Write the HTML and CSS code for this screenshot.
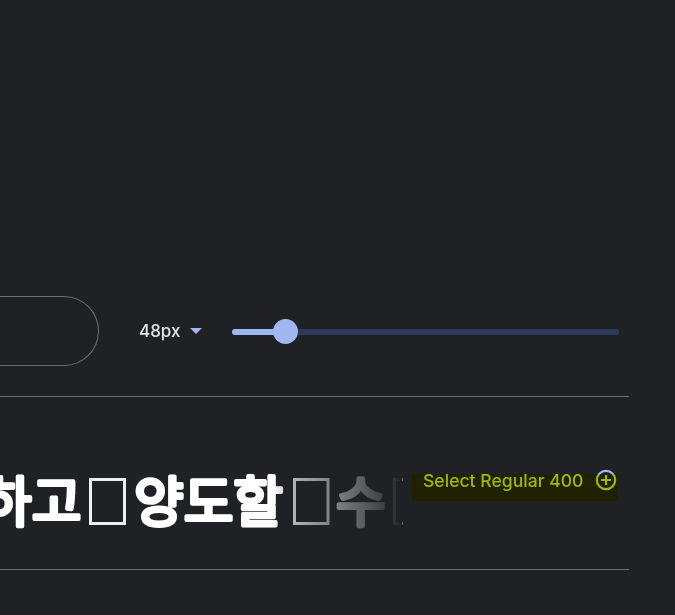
FILE: index.html
```html
<!DOCTYPE html>
<html lang="ko">
<head>
<meta charset="utf-8">
<title>Font style</title>
<link rel="stylesheet" href="styles.css">
</head>
<body>
<main class="page">
  <section class="controls">
    <div class="pill"></div>
    <div class="size-select">
      <span class="size-value">48px</span>
      <span class="caret"></span>
    </div>
    <div class="slider">
      <div class="slider-fill"></div>
      <div class="slider-thumb"></div>
    </div>
  </section>
  <section class="style-row">
    <div class="sample">
      <svg class="sample-svg" width="403" height="172" viewBox="0 0 403 172">
        <text class="glyphs" x="-18" y="125">하고</text>
        <rect class="tofu" x="90.5" y="82.5" width="34" height="44"/>
        <text class="glyphs" x="134" y="125">양도할</text>
        <rect class="tofu" x="294.5" y="82.5" width="33.5" height="44"/>
        <text class="glyphs" x="336" y="125">수</text>
        <rect class="tofu" x="394.5" y="82.5" width="34" height="44"/>
      </svg>
    </div>
    <i class="tick tick-top"></i>
    <i class="tick tick-bottom"></i>
    <div class="select-btn">
      <span>Select Regular 400</span>
      <svg class="plus" viewBox="0 0 24 24" width="24" height="24" aria-hidden="true"><circle cx="12" cy="12" r="9.2" fill="none" stroke="currentColor" stroke-width="2.2"/><path d="M12 7v10M7 12h10" fill="none" stroke="currentColor" stroke-width="2.2"/></svg>
      <div class="highlight"></div>
    </div>
  </section>
</main>
</body>
</html>
```
FILE: styles.css
```css
* { box-sizing: border-box; }
html, body { margin: 0; height: 100%; }
body {
  background: #202124;
  overflow: hidden;
  font-family: "Inter", "Roboto", "Liberation Sans", sans-serif;
}
.page {
  width: 675px;
  height: 615px;
  padding-top: 296px;
  overflow: hidden;
}
.controls {
  width: 629px;
  height: 101px;
  display: flex;
  align-items: flex-start;
  border-bottom: 1px solid #6b6e72;
}
.pill {
  width: 99px;
  height: 70px;
  flex: none;
  border: 1px solid #6b6e72;
  border-left: 0;
  border-radius: 0 35px 35px 0;
}
.size-select {
  margin-left: 40px;
  height: 70px;
  width: 64px;
  flex: none;
  display: flex;
  align-items: center;
  gap: 10px;
}
.size-value {
  font-size: 17px;
  font-weight: 500;
  color: #e3e3e3;
}
.caret {
  width: 0;
  height: 0;
  border-left: 6px solid transparent;
  border-right: 6px solid transparent;
  border-top: 6px solid #a0b8f2;
}
.slider {
  margin-left: 29px;
  width: 387px;
  height: 72px;
  flex: none;
  position: relative;
  display: flex;
  align-items: center;
}
.slider::before {
  content: "";
  width: 100%;
  height: 6px;
  border-radius: 3px;
  background: #2e3a5c;
}
.slider-fill {
  position: absolute;
  left: 0;
  top: 33px;
  width: 53px;
  height: 6px;
  border-radius: 3px;
  background: #a0b8f2;
}
.slider-thumb {
  position: absolute;
  left: 41px;
  top: 23px;
  width: 25px;
  height: 25px;
  border-radius: 50%;
  background: #a0b8f2;
}
.style-row {
  width: 629px;
  height: 173px;
  border-bottom: 1px solid #6b6e72;
  position: relative;
}
.sample {
  width: 403px;
  height: 172px;
  overflow: hidden;
  -webkit-mask-image: linear-gradient(to right, #000 272px, rgba(0,0,0,.72) 293px, rgba(0,0,0,.42) 338px, rgba(0,0,0,.09) 393px, transparent 403px);
  mask-image: linear-gradient(to right, #000 272px, rgba(0,0,0,.72) 293px, rgba(0,0,0,.42) 338px, rgba(0,0,0,.09) 393px, transparent 403px);
}
.sample-svg { display: block; overflow: hidden; }
.glyphs {
  font-family: "Noto Sans CJK KR", sans-serif;
  font-size: 54px;
  font-weight: 400;
  fill: #fff;
  stroke: #fff;
  stroke-width: 4px;
  stroke-linejoin: round;
  stroke-linecap: round;
}
.tofu {
  fill: none;
  stroke: #eee;
  stroke-width: 3px;
}
.tick {
  position: absolute;
  left: 402px;
  width: 1px;
  height: 3px;
  background: #6a6a6a;
}
.tick-top { top: 81px; }
.tick-bottom { top: 125px; }
.select-btn {
  position: absolute;
  left: 412px;
  top: 65px;
  width: 207px;
  height: 36px;
  display: flex;
  align-items: center;
  gap: 11px;
  padding-left: 11px;
  font-size: 17.6px;
  font-weight: 500;
  color: #a0b8f2;
  white-space: nowrap;
}
.plus { flex: none; }
.highlight {
  position: absolute;
  left: 0;
  top: 12px;
  width: 206px;
  height: 27px;
  background: #ffff00;
  mix-blend-mode: multiply;
}
```
